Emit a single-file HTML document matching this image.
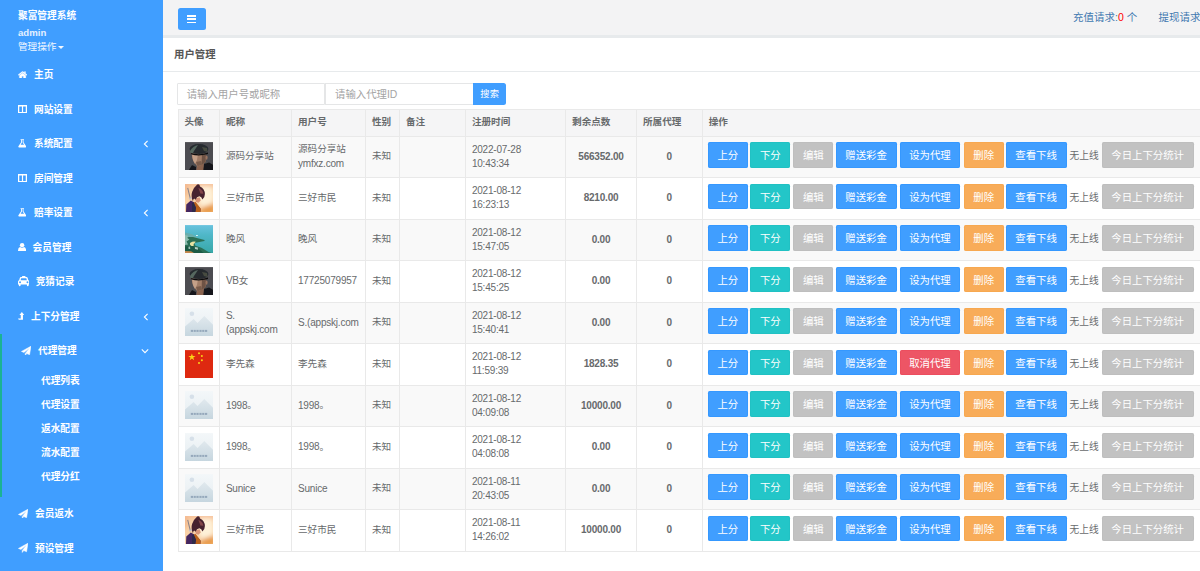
<!DOCTYPE html>
<html lang="zh-CN"><head><meta charset="utf-8"><title>用户管理</title>
<style>
*{box-sizing:border-box;margin:0;padding:0}
html,body{width:1200px;height:571px;overflow:hidden;background:#fff}
body{font-family:"Liberation Sans","Noto Sans CJK SC",sans-serif;font-size:9.6px;color:#676a6c;position:relative}
#side{position:absolute;left:0;top:0;width:163px;height:571px;background:#409eff;color:#fff}
#side .brand{position:absolute;left:18px;top:9px;font-size:9.7px;font-weight:bold;line-height:14px;color:#fff}
#side .adm{position:absolute;left:18px;top:27px;font-size:9.6px;font-weight:bold;line-height:12px;color:#e4f0ff}
#side .ops{position:absolute;left:18px;top:40px;font-size:9.6px;line-height:13px;color:#f2f8ff}
#side .ops i{display:inline-block;width:0;height:0;border-left:3px solid transparent;border-right:3px solid transparent;border-top:3px solid #f2f8ff;margin-left:2px;vertical-align:1px}
.actbar{position:absolute;left:0;top:333.7px;width:2px;height:163px;background:#1ab394}
.nav{position:absolute;height:16px;line-height:16px;font-weight:bold;font-size:9.7px;color:#fff;white-space:nowrap}
.ic{position:absolute;display:block}
.arr{position:absolute;left:143.4px;width:6px;height:8px}
.sub{position:absolute;left:41px;height:16px;line-height:16px;font-weight:bold;font-size:9.7px;color:#fff;white-space:nowrap}
#top{position:absolute;left:163px;top:0;width:1037px;height:34.5px;background:#f3f3f4}
#topb{position:absolute;left:163px;top:34.6px;width:1037px;height:3.6px;background:#e7eaec}
#menu{position:absolute;left:177.7px;top:8px;width:28px;height:22.2px;background:#409eff;border-radius:2.5px}
#menu i{position:absolute;left:9.5px;width:9px;height:1.5px;background:#fff}
.tl{position:absolute;top:9.7px;font-size:10.5px;line-height:14px;color:#3f78b0;white-space:nowrap}
.tl b{font-weight:normal;color:#f00}
#title{position:absolute;left:174px;top:46.7px;font-size:10.4px;font-weight:bold;line-height:16px;color:#555}
#tline{position:absolute;left:163px;top:71px;width:1037px;height:1px;background:#e7eaec}
.inp{position:absolute;top:83px;height:22px;border:1px solid #e5e6e7;background:#fff;color:#a4a4a4;font-size:10.4px;line-height:21.6px;padding-left:9px;white-space:nowrap}
#sbtn{position:absolute;left:473px;top:83px;width:33.3px;height:22px;background:#409eff;color:#fff;border-radius:0 2.5px 2.5px 0;text-align:center;line-height:22px;font-size:9.3px}
table{position:absolute;left:177.5px;top:108.6px;width:1030px;border-collapse:collapse;table-layout:fixed;border:1px solid #e9e9e9}
th,td{border:1px solid #e9e9e9;padding:0 0 1.5px 6px;text-align:left;vertical-align:middle;font-size:9.6px;line-height:13.9px;overflow:hidden}
th{height:27.2px;background:#f5f5f6;font-weight:bold;color:#676a6c}
td{height:41.5px;white-space:nowrap}
tr.odd td{background:#f9f9f9}
tr.even td{background:#fff}
td.c1{padding:5.5px 0 0 6.5px;vertical-align:top}
.av{display:block;width:28px;height:28.2px}
td.num{text-align:center;font-weight:bold;padding:0 0 1.5px 0}
.l{font-size:10px;letter-spacing:-0.2px;position:relative;top:0.6px}
td.op{padding:0;vertical-align:top}
.ops2{position:relative;height:40px;width:100%}
.b{position:absolute;top:5.5px;height:25.4px;line-height:27.4px;overflow:hidden;border-radius:2.3px;color:#fff;text-align:center;font-size:10.4px;white-space:nowrap}
.nl{position:absolute;top:12.3px;line-height:14px;font-size:9.7px;color:#676a6c;white-space:nowrap}
.blue{background:#409eff;box-shadow:inset 0 0 0 1px #3598ff}.teal{background:#23c6c8;box-shadow:inset 0 0 0 1px #21c1c3}.gray{background:#c2c2c2;box-shadow:inset 0 0 0 1px #bebebe}.orange{background:#f8ac59;box-shadow:inset 0 0 0 1px #f7a850}.red{background:#ed5565;box-shadow:inset 0 0 0 1px #ec4e5f}
.w40{width:40px}.w61{width:60.8px}.w92{width:92px}
</style></head><body>
<svg width="0" height="0" style="position:absolute"><defs><filter id="bl" x="-10%" y="-10%" width="120%" height="120%"><feGaussianBlur stdDeviation="0.55"/></filter><filter id="bl2" x="-30%" y="-30%" width="160%" height="160%"><feGaussianBlur stdDeviation="2.2"/></filter><filter id="bl3" x="-10%" y="-10%" width="120%" height="120%"><feGaussianBlur stdDeviation="0.3"/></filter></defs></svg>
<div id="side">
<div class="brand">聚富管理系统</div>
<div class="adm">admin</div>
<div class="ops">管理操作<i></i></div>
<div class="actbar"></div>
<svg class="ic" viewBox="0 0 12 10" preserveAspectRatio="none" style="left:17.9px;top:70.7px;width:9.2px;height:7.4px"><path d="M6 0.2 L0.1 5 L1 6.1 L6 2.1 L11 6.1 L11.9 5 L9.9 3.4 V0.8 H8.4 V2.1Z M6 2.7 L1.8 6.1 V9.9 H5 V7.2 H7 V9.9 H10.2 V6.1Z" fill="#fff" stroke="#fff" stroke-width="0.3"/></svg><div class="nav" style="top:67.3px;left:34px">主页</div>
<svg class="ic" viewBox="0 0 9 8.2" preserveAspectRatio="none" style="left:17.9px;top:104.5px;width:9px;height:8.2px"><path d="M0 0 H9 V8.2 H0Z M1.25 1.6 V6.95 H3.9 V1.6Z M5.1 1.6 V6.95 H7.75 V1.6Z" fill="#fff" fill-rule="evenodd"/></svg><div class="nav" style="top:101.5px;left:34px">网站设置</div>
<svg class="ic" viewBox="0 0 12 12" preserveAspectRatio="none" style="left:17.9px;top:139.2px;width:8.6px;height:8.5px"><path d="M3.6 0.2 H8.4 V1.4 H7.7 V4.6 L11.4 10.2 Q12 11.9 10.4 11.9 H1.6 Q0 11.9 0.6 10.2 L4.3 4.6 V1.4 H3.6Z M5.5 1.4 V5 L3.6 8 H8.4 L6.5 5 V1.4Z" fill="#fff" fill-rule="evenodd"/></svg><div class="nav" style="top:136.3px;left:34px">系统配置</div><svg class="arr" style="top:139.8px" viewBox="0 0 6 8"><path d="M4.6 0.8 L1.4 4 L4.6 7.2" stroke="#fff" stroke-width="1.1" fill="none"/></svg>
<svg class="ic" viewBox="0 0 9 8.2" preserveAspectRatio="none" style="left:17.9px;top:173.7px;width:9px;height:8.2px"><path d="M0 0 H9 V8.2 H0Z M1.25 1.6 V6.95 H3.9 V1.6Z M5.1 1.6 V6.95 H7.75 V1.6Z" fill="#fff" fill-rule="evenodd"/></svg><div class="nav" style="top:170.7px;left:34px">房间管理</div>
<svg class="ic" viewBox="0 0 12 12" preserveAspectRatio="none" style="left:17.9px;top:208.2px;width:8.6px;height:8.5px"><path d="M3.6 0.2 H8.4 V1.4 H7.7 V4.6 L11.4 10.2 Q12 11.9 10.4 11.9 H1.6 Q0 11.9 0.6 10.2 L4.3 4.6 V1.4 H3.6Z M5.5 1.4 V5 L3.6 8 H8.4 L6.5 5 V1.4Z" fill="#fff" fill-rule="evenodd"/></svg><div class="nav" style="top:205.4px;left:34px">赔率设置</div><svg class="arr" style="top:208.9px" viewBox="0 0 6 8"><path d="M4.6 0.8 L1.4 4 L4.6 7.2" stroke="#fff" stroke-width="1.1" fill="none"/></svg>
<svg class="ic" viewBox="0 0 11 12" preserveAspectRatio="none" style="left:17.9px;top:242.9px;width:8.2px;height:8.5px"><circle cx="5.5" cy="3.1" r="3" fill="#fff"/><path d="M1 12 Q0 12 0 10.6 Q0.2 6.4 2.8 5.8 Q5.5 7.8 8.2 5.8 Q10.8 6.4 11 10.6 Q11 12 10 12Z" fill="#fff"/></svg><div class="nav" style="top:240.1px;left:32.6px">会员管理</div>
<svg class="ic" viewBox="0 0 14 12" preserveAspectRatio="none" style="left:17.9px;top:276.4px;width:11.5px;height:10.2px"><path d="M5 0 H9 V1.2 H10.4 Q11.4 1.2 11.8 2.3 L12.6 5 Q14 5.4 14 6.8 V10 H13 V11 Q13 12 11.9 12 Q10.8 12 10.8 11 V10 H3.2 V11 Q3.2 12 2.1 12 Q1 12 1 11 V10 H0 V6.8 Q0 5.4 1.4 5 L2.2 2.3 Q2.6 1.2 3.6 1.2 H5Z M3.9 2.7 L3.2 5 H10.8 L10.1 2.7Z M2.5 6.3 A1.15 1.15 0 1 0 2.5 8.6 A1.15 1.15 0 1 0 2.5 6.3Z M11.5 6.3 A1.15 1.15 0 1 0 11.5 8.6 A1.15 1.15 0 1 0 11.5 6.3Z" fill="#fff" fill-rule="evenodd"/></svg><div class="nav" style="top:274.4px;left:35.7px">竞猜记录</div>
<svg class="ic" viewBox="0 0 8 10" preserveAspectRatio="none" style="left:17.9px;top:312.3px;width:6.3px;height:7.7px"><path d="M4.9 0 L8 4 H6.3 V10 H1 L0 8.4 H3.5 V4 H1.8Z" fill="#fff"/></svg><div class="nav" style="top:309.1px;left:31px">上下分管理</div><svg class="arr" style="top:312.6px" viewBox="0 0 6 8"><path d="M4.6 0.8 L1.4 4 L4.6 7.2" stroke="#fff" stroke-width="1.1" fill="none"/></svg>
<svg class="ic" viewBox="0 0 12 12" preserveAspectRatio="none" style="left:20.9px;top:345.6px;width:10.2px;height:9.9px"><path d="M11.7 0.3 L10.1 10.6 L6.8 9.2 L5 11.5 V9 L10.1 2.4 L3.5 7.8 L0.5 6.6Z" fill="#fff" stroke="#fff" stroke-width="0.6" stroke-linejoin="round"/></svg><div class="nav" style="top:343.4px;left:38px">代理管理</div><svg class="arr" style="width:8px;height:6px;left:141.4px;top:347.7px" viewBox="0 0 8 6"><path d="M0.8 1.4 L4 4.6 L7.2 1.4" stroke="#fff" stroke-width="1.1" fill="none"/></svg>
<svg class="ic" viewBox="0 0 12 12" preserveAspectRatio="none" style="left:17.9px;top:508.6px;width:10.2px;height:9.9px"><path d="M11.7 0.3 L10.1 10.6 L6.8 9.2 L5 11.5 V9 L10.1 2.4 L3.5 7.8 L0.5 6.6Z" fill="#fff" stroke="#fff" stroke-width="0.6" stroke-linejoin="round"/></svg><div class="nav" style="top:506.4px;left:35px">会员返水</div>
<svg class="ic" viewBox="0 0 12 12" preserveAspectRatio="none" style="left:17.9px;top:542.8px;width:10.2px;height:9.9px"><path d="M11.7 0.3 L10.1 10.6 L6.8 9.2 L5 11.5 V9 L10.1 2.4 L3.5 7.8 L0.5 6.6Z" fill="#fff" stroke="#fff" stroke-width="0.6" stroke-linejoin="round"/></svg><div class="nav" style="top:540.6px;left:35px">预设管理</div>
<div class="sub" style="top:372.6px">代理列表</div>
<div class="sub" style="top:396.7px">代理设置</div>
<div class="sub" style="top:420.9px">返水配置</div>
<div class="sub" style="top:444.7px">流水配置</div>
<div class="sub" style="top:469.1px">代理分红</div>
</div>
<div id="top"></div><div id="topb"></div>
<div id="menu"><i style="top:7px"></i><i style="top:10.25px"></i><i style="top:13.5px"></i></div>
<div class="tl" style="left:1073px">充值请求:<b>0</b> 个</div>
<div class="tl" style="left:1158.5px">提现请求:<b>0</b> 个</div>
<div id="title">用户管理</div>
<div id="tline"></div>
<div class="inp" style="left:176.7px;width:148.8px;border-radius:1px 0 0 1px">请输入用户号或昵称</div>
<div class="inp" style="left:325px;width:148.5px">请输入代理ID</div>
<div id="sbtn">搜索</div>
<table>
<colgroup><col style="width:41.4px"><col style="width:72.1px"><col style="width:74px"><col style="width:33.9px"><col style="width:66px"><col style="width:100.2px"><col style="width:70.9px"><col style="width:65.7px"><col></colgroup>
<thead><tr><th>头像</th><th>昵称</th><th>用户号</th><th>性别</th><th>备注</th><th>注册时间</th><th>剩余点数</th><th>所属代理</th><th>操作</th></tr></thead>
<tbody>
<tr class="odd"><td class="c1"><svg class="av" viewBox="0 0 28 28"><rect width="28" height="28" fill="#4c4c51"/><g filter="url(#bl)"><path d="M2 31 L7 23 L11 25 L11 31Z M17 31 L19 22 L24 20.5 L30 24 L30 31Z" fill="#17181a"/><path d="M11 31 L12 23 L19 21 L18 31Z" fill="#8a6450"/><path d="M6.6 11.4 L21 11.4 L20.6 20 L16 23 L12.3 24.4 L8.8 20 L7.2 16Z" fill="#a07c66"/><path d="M7 11.6 L13 11.6 L12 18 L10 22 L8 18Z" fill="#c4a088"/><path d="M17 12 L21 12 L20.5 20 L16.5 23Z" fill="#6e5244"/><path d="M11 20 L16 19 L17 22.5 L12.5 24.2Z" fill="#7a5c4c"/><ellipse cx="21.6" cy="15.5" rx="1" ry="2.2" fill="#9a7460"/><ellipse cx="14" cy="7" rx="9.4" ry="5" fill="#262b2f"/><path d="M5 9 Q8 4 13 3 L9 9 L8 11 L5.5 11Z" fill="#56675f"/><path d="M17 5 L22 6 L22.5 10 L19 9Z" fill="#474c40"/><path d="M6 11 Q14 13.5 23 10.5 L23 12 Q14 14.5 6.5 12.4Z" fill="#0e0f11"/></g></svg></td><td>源码分享站</td><td>源码分享站<br><span class="l">ymfxz.com</span></td><td>未知</td><td></td><td><span class="l">2022-07-28</span><br><span class="l">10:43:34</span></td><td class="num"><span class="l">566352.00</span></td><td class="num"><span class="l">0</span></td><td class="op"><div class="ops2"><span class="b blue w40" style="left:5.2px">上分</span><span class="b teal w40" style="left:47.7px">下分</span><span class="b gray w40" style="left:90.7px">编辑</span><span class="b blue w61" style="left:133.1px">赠送彩金</span><span class="b blue w61" style="left:196.9px">设为代理</span><span class="b orange w40" style="left:261.1px">删除</span><span class="b blue w61" style="left:303.1px">查看下线</span><span class="nl" style="left:366.9px">无上线</span><span class="b gray w92" style="left:399.0px">今日上下分统计</span></div></td></tr>
<tr class="even"><td class="c1"><svg class="av" viewBox="0 0 28 28"><rect width="28" height="28" fill="#f9d2a8"/><g filter="url(#bl2)"><ellipse cx="21" cy="12" rx="8" ry="12" fill="#fef1d8"/><rect x="-2" y="-3" width="32" height="5" fill="#f5bb94"/><rect x="-3" y="0" width="5" height="12" fill="#f3b488"/><path d="M13 30 L18 23 L30 19 L30 30Z" fill="#e99c4c"/></g><g filter="url(#bl)"><path d="M2.2 4 L3.2 3.7 L6 14.8 L4.9 15.1Z" fill="#8d838a"/><path d="M3.8 14 L7.2 13.2 L7.4 14.5 L4 15.4Z" fill="#c4c0c8"/><path d="M1 28 L1.3 20.5 L5.8 16.4 L11 19.4 L15.6 24.6 L15 31 L-1 31Z" fill="#44265f"/><path d="M8.6 19 L10.4 17.6 L13 21 L15.8 24.6 L15.4 31 L9.6 31 L11 24Z" fill="#b9601c"/><path d="M7 19 L8.8 18.4 L11 23.4 L9.8 31 L7 31Z" fill="#2f2c48"/><path d="M10.4 14.4 L14.6 13.2 L15.8 16.4 L13.4 18.6 L10.8 17.6Z" fill="#d9967a"/><path d="M12.2 0.5 Q14.8 -0.4 15 2.4 Q19.8 4.6 19.9 10 Q20 13 17.4 15.4 Q16.6 12.4 14.4 12.2 Q11.6 12.6 10.6 15.6 L9.2 14.4 Q7.8 15.2 8 17.4 Q5.6 12 7.2 7.6 Q8.8 3.4 12.2 0.5Z" fill="#47232e"/><path d="M13.4 4 Q17.4 5 18.4 9.6 L15.4 9.4Z" fill="#84464a"/></g></svg></td><td>三好市民</td><td>三好市民</td><td>未知</td><td></td><td><span class="l">2021-08-12</span><br><span class="l">16:23:13</span></td><td class="num"><span class="l">8210.00</span></td><td class="num"><span class="l">0</span></td><td class="op"><div class="ops2"><span class="b blue w40" style="left:5.2px">上分</span><span class="b teal w40" style="left:47.7px">下分</span><span class="b gray w40" style="left:90.7px">编辑</span><span class="b blue w61" style="left:133.1px">赠送彩金</span><span class="b blue w61" style="left:196.9px">设为代理</span><span class="b orange w40" style="left:261.1px">删除</span><span class="b blue w61" style="left:303.1px">查看下线</span><span class="nl" style="left:366.9px">无上线</span><span class="b gray w92" style="left:399.0px">今日上下分统计</span></div></td></tr>
<tr class="odd"><td class="c1"><svg class="av" viewBox="0 0 28 28"><defs><linearGradient id="g3" x1="0" y1="0" x2="0" y2="1"><stop offset="0" stop-color="#68c2de"/><stop offset="0.35" stop-color="#4fb7c8"/><stop offset="1" stop-color="#37a8a8"/></linearGradient></defs><rect width="28" height="28" fill="url(#g3)"/><g filter="url(#bl)"><path d="M0 7.4 L7 9.2 L11.6 12 L12 13 L0 16Z" fill="#6aaead"/><path d="M0 12.6 L4 11.8 L8 12 L11.8 13 L19.6 15 L19.4 15.8 L14.4 16.8 L9.2 17.8 L10.5 20.6 L16.4 22.6 L23.5 27 L29 28.6 L29 31 L-1 31 L-1 12.6Z" fill="#2b6f57"/><path d="M0 10 L3 10.6 L2.4 13 L4.4 14.4 L1.6 16.4 L3 19.4 L0 20Z" fill="#8dbdb0"/><path d="M5 17.8 Q7.8 16 10.8 16.6 Q8 18.6 8.6 20.8 L6.8 21.2 Q4.2 19.8 5 17.8Z" fill="#e8e3a2"/><path d="M-1 21.4 L8 21 L14 24 L18.6 28 L20 31 L-1 31Z" fill="#1d5a45"/><path d="M9.8 22 L12.8 22.4 L13 24.6 L10 24Z" fill="#b5d2c6"/><path d="M3.4 21.6 L5 21.4 L5.2 24 L3.6 24Z" fill="#9cc4b6"/><path d="M-1 25.8 L6 26.2 L9 28 L10 31 L-1 31Z" fill="#c4884f"/><path d="M11 10 L13 9.8 L13 10.7 L11 10.9Z" fill="#e4fbff"/></g></svg></td><td>晚风</td><td>晚风</td><td>未知</td><td></td><td><span class="l">2021-08-12</span><br><span class="l">15:47:05</span></td><td class="num"><span class="l">0.00</span></td><td class="num"><span class="l">0</span></td><td class="op"><div class="ops2"><span class="b blue w40" style="left:5.2px">上分</span><span class="b teal w40" style="left:47.7px">下分</span><span class="b gray w40" style="left:90.7px">编辑</span><span class="b blue w61" style="left:133.1px">赠送彩金</span><span class="b blue w61" style="left:196.9px">设为代理</span><span class="b orange w40" style="left:261.1px">删除</span><span class="b blue w61" style="left:303.1px">查看下线</span><span class="nl" style="left:366.9px">无上线</span><span class="b gray w92" style="left:399.0px">今日上下分统计</span></div></td></tr>
<tr class="even"><td class="c1"><svg class="av" viewBox="0 0 28 28"><rect width="28" height="28" fill="#4c4c51"/><g filter="url(#bl)"><path d="M2 31 L7 23 L11 25 L11 31Z M17 31 L19 22 L24 20.5 L30 24 L30 31Z" fill="#17181a"/><path d="M11 31 L12 23 L19 21 L18 31Z" fill="#8a6450"/><path d="M6.6 11.4 L21 11.4 L20.6 20 L16 23 L12.3 24.4 L8.8 20 L7.2 16Z" fill="#a07c66"/><path d="M7 11.6 L13 11.6 L12 18 L10 22 L8 18Z" fill="#c4a088"/><path d="M17 12 L21 12 L20.5 20 L16.5 23Z" fill="#6e5244"/><path d="M11 20 L16 19 L17 22.5 L12.5 24.2Z" fill="#7a5c4c"/><ellipse cx="21.6" cy="15.5" rx="1" ry="2.2" fill="#9a7460"/><ellipse cx="14" cy="7" rx="9.4" ry="5" fill="#262b2f"/><path d="M5 9 Q8 4 13 3 L9 9 L8 11 L5.5 11Z" fill="#56675f"/><path d="M17 5 L22 6 L22.5 10 L19 9Z" fill="#474c40"/><path d="M6 11 Q14 13.5 23 10.5 L23 12 Q14 14.5 6.5 12.4Z" fill="#0e0f11"/></g></svg></td><td><span class="l">VB</span>女</td><td><span class="l">17725079957</span></td><td>未知</td><td></td><td><span class="l">2021-08-12</span><br><span class="l">15:45:25</span></td><td class="num"><span class="l">0.00</span></td><td class="num"><span class="l">0</span></td><td class="op"><div class="ops2"><span class="b blue w40" style="left:5.2px">上分</span><span class="b teal w40" style="left:47.7px">下分</span><span class="b gray w40" style="left:90.7px">编辑</span><span class="b blue w61" style="left:133.1px">赠送彩金</span><span class="b blue w61" style="left:196.9px">设为代理</span><span class="b orange w40" style="left:261.1px">删除</span><span class="b blue w61" style="left:303.1px">查看下线</span><span class="nl" style="left:366.9px">无上线</span><span class="b gray w92" style="left:399.0px">今日上下分统计</span></div></td></tr>
<tr class="odd"><td class="c1"><svg class="av" viewBox="0 0 28 28"><defs><linearGradient id="g4" x1="0" y1="0" x2="0" y2="1"><stop offset="0" stop-color="#f3f7f9"/><stop offset="1" stop-color="#e6edf1"/></linearGradient><linearGradient id="g4b" x1="0" y1="0" x2="0" y2="1"><stop offset="0" stop-color="#e1e9ee"/><stop offset="1" stop-color="#c6d6df"/></linearGradient></defs><rect width="28" height="28" fill="url(#g4)"/><circle cx="6.9" cy="5.6" r="2.3" fill="#d6e0e9"/><path d="M0 18.5 L8.6 11 L12.5 14.9 L19.3 7.8 L28 16.6 L28 28 L0 28Z" fill="url(#g4b)"/><g fill="#8398ae" opacity="0.75" filter="url(#bl3)"><rect x="5.8" y="21.8" width="2.2" height="2"/><rect x="8.6" y="21.8" width="2.2" height="2"/><rect x="11.4" y="21.8" width="2.2" height="2"/><rect x="14.4" y="21.8" width="2.2" height="2"/><rect x="17.2" y="21.8" width="2.2" height="2"/><rect x="20" y="21.8" width="2.2" height="2"/></g></svg></td><td><span class="l">S.</span><br><span class="l">(appskj.com</span></td><td><span class="l">S.(appskj.com</span></td><td>未知</td><td></td><td><span class="l">2021-08-12</span><br><span class="l">15:40:41</span></td><td class="num"><span class="l">0.00</span></td><td class="num"><span class="l">0</span></td><td class="op"><div class="ops2"><span class="b blue w40" style="left:5.2px">上分</span><span class="b teal w40" style="left:47.7px">下分</span><span class="b gray w40" style="left:90.7px">编辑</span><span class="b blue w61" style="left:133.1px">赠送彩金</span><span class="b blue w61" style="left:196.9px">设为代理</span><span class="b orange w40" style="left:261.1px">删除</span><span class="b blue w61" style="left:303.1px">查看下线</span><span class="nl" style="left:366.9px">无上线</span><span class="b gray w92" style="left:399.0px">今日上下分统计</span></div></td></tr>
<tr class="even"><td class="c1"><svg class="av" viewBox="0 0 28 28"><rect width="28" height="28" fill="#de2910"/><g fill="#fbd417" filter="url(#bl3)"><path d="M6.9 3.3 L7.8 5.9 L10.5 5.9 L8.3 7.5 L9.1 10.1 L6.9 8.5 L4.7 10.1 L5.5 7.5 L3.3 5.9 L6 5.9Z"/><circle cx="14" cy="3.1" r="1"/><circle cx="16.9" cy="5.8" r="1"/><circle cx="16.9" cy="10.1" r="1"/><circle cx="14" cy="12.8" r="1"/></g></svg></td><td>李先森</td><td>李先森</td><td>未知</td><td></td><td><span class="l">2021-08-12</span><br><span class="l">11:59:39</span></td><td class="num"><span class="l">1828.35</span></td><td class="num"><span class="l">0</span></td><td class="op"><div class="ops2"><span class="b blue w40" style="left:5.2px">上分</span><span class="b teal w40" style="left:47.7px">下分</span><span class="b gray w40" style="left:90.7px">编辑</span><span class="b blue w61" style="left:133.1px">赠送彩金</span><span class="b red w61" style="left:196.9px">取消代理</span><span class="b orange w40" style="left:261.1px">删除</span><span class="b blue w61" style="left:303.1px">查看下线</span><span class="nl" style="left:366.9px">无上线</span><span class="b gray w92" style="left:399.0px">今日上下分统计</span></div></td></tr>
<tr class="odd"><td class="c1"><svg class="av" viewBox="0 0 28 28"><defs><linearGradient id="g4" x1="0" y1="0" x2="0" y2="1"><stop offset="0" stop-color="#f3f7f9"/><stop offset="1" stop-color="#e6edf1"/></linearGradient><linearGradient id="g4b" x1="0" y1="0" x2="0" y2="1"><stop offset="0" stop-color="#e1e9ee"/><stop offset="1" stop-color="#c6d6df"/></linearGradient></defs><rect width="28" height="28" fill="url(#g4)"/><circle cx="6.9" cy="5.6" r="2.3" fill="#d6e0e9"/><path d="M0 18.5 L8.6 11 L12.5 14.9 L19.3 7.8 L28 16.6 L28 28 L0 28Z" fill="url(#g4b)"/><g fill="#8398ae" opacity="0.75" filter="url(#bl3)"><rect x="5.8" y="21.8" width="2.2" height="2"/><rect x="8.6" y="21.8" width="2.2" height="2"/><rect x="11.4" y="21.8" width="2.2" height="2"/><rect x="14.4" y="21.8" width="2.2" height="2"/><rect x="17.2" y="21.8" width="2.2" height="2"/><rect x="20" y="21.8" width="2.2" height="2"/></g></svg></td><td><span class="l">1998</span>。</td><td><span class="l">1998</span>。</td><td>未知</td><td></td><td><span class="l">2021-08-12</span><br><span class="l">04:09:08</span></td><td class="num"><span class="l">10000.00</span></td><td class="num"><span class="l">0</span></td><td class="op"><div class="ops2"><span class="b blue w40" style="left:5.2px">上分</span><span class="b teal w40" style="left:47.7px">下分</span><span class="b gray w40" style="left:90.7px">编辑</span><span class="b blue w61" style="left:133.1px">赠送彩金</span><span class="b blue w61" style="left:196.9px">设为代理</span><span class="b orange w40" style="left:261.1px">删除</span><span class="b blue w61" style="left:303.1px">查看下线</span><span class="nl" style="left:366.9px">无上线</span><span class="b gray w92" style="left:399.0px">今日上下分统计</span></div></td></tr>
<tr class="even"><td class="c1"><svg class="av" viewBox="0 0 28 28"><defs><linearGradient id="g4" x1="0" y1="0" x2="0" y2="1"><stop offset="0" stop-color="#f3f7f9"/><stop offset="1" stop-color="#e6edf1"/></linearGradient><linearGradient id="g4b" x1="0" y1="0" x2="0" y2="1"><stop offset="0" stop-color="#e1e9ee"/><stop offset="1" stop-color="#c6d6df"/></linearGradient></defs><rect width="28" height="28" fill="url(#g4)"/><circle cx="6.9" cy="5.6" r="2.3" fill="#d6e0e9"/><path d="M0 18.5 L8.6 11 L12.5 14.9 L19.3 7.8 L28 16.6 L28 28 L0 28Z" fill="url(#g4b)"/><g fill="#8398ae" opacity="0.75" filter="url(#bl3)"><rect x="5.8" y="21.8" width="2.2" height="2"/><rect x="8.6" y="21.8" width="2.2" height="2"/><rect x="11.4" y="21.8" width="2.2" height="2"/><rect x="14.4" y="21.8" width="2.2" height="2"/><rect x="17.2" y="21.8" width="2.2" height="2"/><rect x="20" y="21.8" width="2.2" height="2"/></g></svg></td><td><span class="l">1998</span>。</td><td><span class="l">1998</span>。</td><td>未知</td><td></td><td><span class="l">2021-08-12</span><br><span class="l">04:08:08</span></td><td class="num"><span class="l">0.00</span></td><td class="num"><span class="l">0</span></td><td class="op"><div class="ops2"><span class="b blue w40" style="left:5.2px">上分</span><span class="b teal w40" style="left:47.7px">下分</span><span class="b gray w40" style="left:90.7px">编辑</span><span class="b blue w61" style="left:133.1px">赠送彩金</span><span class="b blue w61" style="left:196.9px">设为代理</span><span class="b orange w40" style="left:261.1px">删除</span><span class="b blue w61" style="left:303.1px">查看下线</span><span class="nl" style="left:366.9px">无上线</span><span class="b gray w92" style="left:399.0px">今日上下分统计</span></div></td></tr>
<tr class="odd"><td class="c1"><svg class="av" viewBox="0 0 28 28"><defs><linearGradient id="g4" x1="0" y1="0" x2="0" y2="1"><stop offset="0" stop-color="#f3f7f9"/><stop offset="1" stop-color="#e6edf1"/></linearGradient><linearGradient id="g4b" x1="0" y1="0" x2="0" y2="1"><stop offset="0" stop-color="#e1e9ee"/><stop offset="1" stop-color="#c6d6df"/></linearGradient></defs><rect width="28" height="28" fill="url(#g4)"/><circle cx="6.9" cy="5.6" r="2.3" fill="#d6e0e9"/><path d="M0 18.5 L8.6 11 L12.5 14.9 L19.3 7.8 L28 16.6 L28 28 L0 28Z" fill="url(#g4b)"/><g fill="#8398ae" opacity="0.75" filter="url(#bl3)"><rect x="5.8" y="21.8" width="2.2" height="2"/><rect x="8.6" y="21.8" width="2.2" height="2"/><rect x="11.4" y="21.8" width="2.2" height="2"/><rect x="14.4" y="21.8" width="2.2" height="2"/><rect x="17.2" y="21.8" width="2.2" height="2"/><rect x="20" y="21.8" width="2.2" height="2"/></g></svg></td><td><span class="l">Sunice</span></td><td><span class="l">Sunice</span></td><td>未知</td><td></td><td><span class="l">2021-08-11</span><br><span class="l">20:43:05</span></td><td class="num"><span class="l">0.00</span></td><td class="num"><span class="l">0</span></td><td class="op"><div class="ops2"><span class="b blue w40" style="left:5.2px">上分</span><span class="b teal w40" style="left:47.7px">下分</span><span class="b gray w40" style="left:90.7px">编辑</span><span class="b blue w61" style="left:133.1px">赠送彩金</span><span class="b blue w61" style="left:196.9px">设为代理</span><span class="b orange w40" style="left:261.1px">删除</span><span class="b blue w61" style="left:303.1px">查看下线</span><span class="nl" style="left:366.9px">无上线</span><span class="b gray w92" style="left:399.0px">今日上下分统计</span></div></td></tr>
<tr class="even"><td class="c1"><svg class="av" viewBox="0 0 28 28"><rect width="28" height="28" fill="#f9d2a8"/><g filter="url(#bl2)"><ellipse cx="21" cy="12" rx="8" ry="12" fill="#fef1d8"/><rect x="-2" y="-3" width="32" height="5" fill="#f5bb94"/><rect x="-3" y="0" width="5" height="12" fill="#f3b488"/><path d="M13 30 L18 23 L30 19 L30 30Z" fill="#e99c4c"/></g><g filter="url(#bl)"><path d="M2.2 4 L3.2 3.7 L6 14.8 L4.9 15.1Z" fill="#8d838a"/><path d="M3.8 14 L7.2 13.2 L7.4 14.5 L4 15.4Z" fill="#c4c0c8"/><path d="M1 28 L1.3 20.5 L5.8 16.4 L11 19.4 L15.6 24.6 L15 31 L-1 31Z" fill="#44265f"/><path d="M8.6 19 L10.4 17.6 L13 21 L15.8 24.6 L15.4 31 L9.6 31 L11 24Z" fill="#b9601c"/><path d="M7 19 L8.8 18.4 L11 23.4 L9.8 31 L7 31Z" fill="#2f2c48"/><path d="M10.4 14.4 L14.6 13.2 L15.8 16.4 L13.4 18.6 L10.8 17.6Z" fill="#d9967a"/><path d="M12.2 0.5 Q14.8 -0.4 15 2.4 Q19.8 4.6 19.9 10 Q20 13 17.4 15.4 Q16.6 12.4 14.4 12.2 Q11.6 12.6 10.6 15.6 L9.2 14.4 Q7.8 15.2 8 17.4 Q5.6 12 7.2 7.6 Q8.8 3.4 12.2 0.5Z" fill="#47232e"/><path d="M13.4 4 Q17.4 5 18.4 9.6 L15.4 9.4Z" fill="#84464a"/></g></svg></td><td>三好市民</td><td>三好市民</td><td>未知</td><td></td><td><span class="l">2021-08-11</span><br><span class="l">14:26:02</span></td><td class="num"><span class="l">10000.00</span></td><td class="num"><span class="l">0</span></td><td class="op"><div class="ops2"><span class="b blue w40" style="left:5.2px">上分</span><span class="b teal w40" style="left:47.7px">下分</span><span class="b gray w40" style="left:90.7px">编辑</span><span class="b blue w61" style="left:133.1px">赠送彩金</span><span class="b blue w61" style="left:196.9px">设为代理</span><span class="b orange w40" style="left:261.1px">删除</span><span class="b blue w61" style="left:303.1px">查看下线</span><span class="nl" style="left:366.9px">无上线</span><span class="b gray w92" style="left:399.0px">今日上下分统计</span></div></td></tr>
</tbody></table>
</body></html>
